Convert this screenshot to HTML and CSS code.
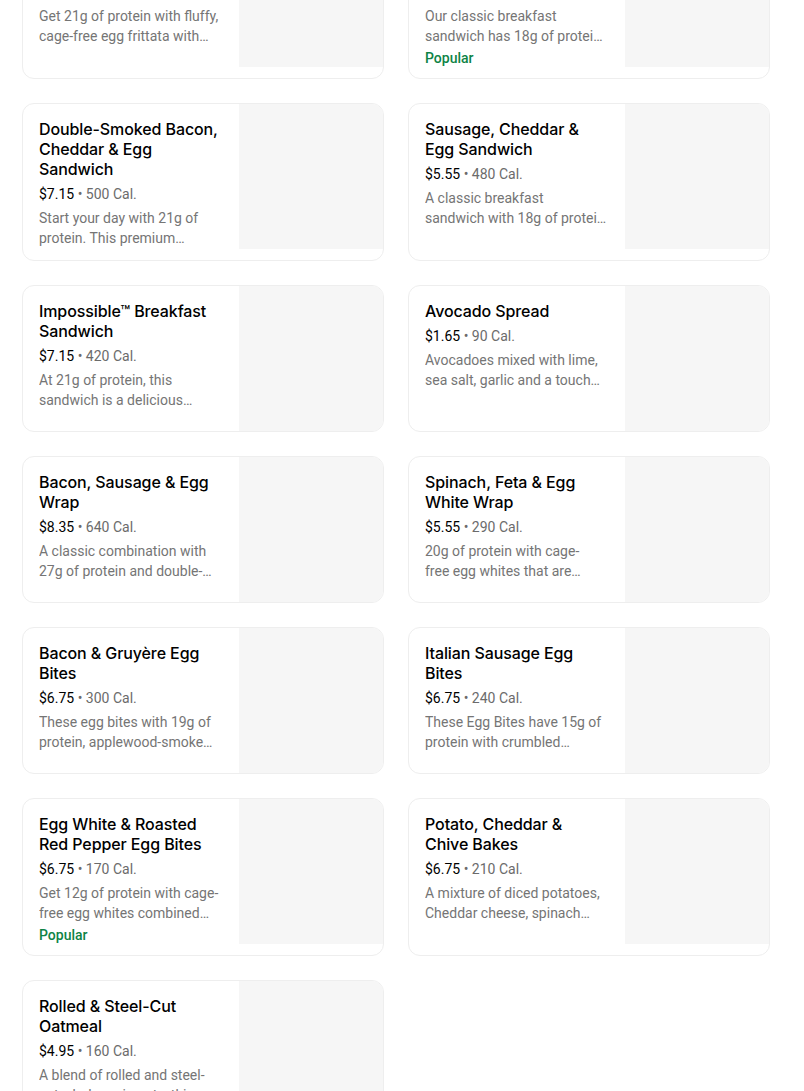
FILE: index.html
```html
<!DOCTYPE html>
<html lang="en">
<head>
<meta charset="utf-8">
<title>Breakfast menu</title>
<link rel="stylesheet" href="styles.css">
</head>
<body>
<main class="menu">
  <article class="card">
    <div class="info">
      <h3 class="title">Turkey Bacon, Cheddar &amp; Egg White Sandwich</h3>
      <p class="meta"><span class="price">$5.95</span> • <span>230 Cal.</span></p>
      <p class="desc">Get 21g of protein with fluffy,<br>cage-free egg frittata with…</p>
    </div>
    <div class="thumb"></div>
  </article>
  <article class="card">
    <div class="info">
      <h3 class="title">Bacon, Gouda &amp; Egg Breakfast Sandwich</h3>
      <p class="meta"><span class="price">$5.95</span> • <span>360 Cal.</span></p>
      <p class="desc">Our classic breakfast<br>sandwich has 18g of protei…</p>
      <p class="tag">Popular</p>
    </div>
    <div class="thumb"></div>
  </article>

  <article class="card">
    <div class="info">
      <h3 class="title">Double-Smoked Bacon, Cheddar &amp; Egg Sandwich</h3>
      <p class="meta"><span class="price">$7.15</span> • <span>500 Cal.</span></p>
      <p class="desc">Start your day with 21g of<br>protein. This premium…</p>
    </div>
    <div class="thumb"></div>
  </article>
  <article class="card">
    <div class="info">
      <h3 class="title">Sausage, Cheddar &amp; Egg Sandwich</h3>
      <p class="meta"><span class="price">$5.55</span> • <span>480 Cal.</span></p>
      <p class="desc">A classic breakfast<br>sandwich with 18g of protei…</p>
    </div>
    <div class="thumb"></div>
  </article>

  <article class="card">
    <div class="info">
      <h3 class="title">Impossible™ Breakfast Sandwich</h3>
      <p class="meta"><span class="price">$7.15</span> • <span>420 Cal.</span></p>
      <p class="desc">At 21g of protein, this<br>sandwich is a delicious…</p>
    </div>
    <div class="thumb"></div>
  </article>
  <article class="card">
    <div class="info">
      <h3 class="title">Avocado Spread</h3>
      <p class="meta"><span class="price">$1.65</span> • <span>90 Cal.</span></p>
      <p class="desc">Avocadoes mixed with lime,<br>sea salt, garlic and a touch…</p>
    </div>
    <div class="thumb"></div>
  </article>

  <article class="card">
    <div class="info">
      <h3 class="title">Bacon, Sausage &amp; Egg Wrap</h3>
      <p class="meta"><span class="price">$8.35</span> • <span>640 Cal.</span></p>
      <p class="desc">A classic combination with<br>27g of protein and double-…</p>
    </div>
    <div class="thumb"></div>
  </article>
  <article class="card">
    <div class="info">
      <h3 class="title">Spinach, Feta &amp; Egg White Wrap</h3>
      <p class="meta"><span class="price">$5.55</span> • <span>290 Cal.</span></p>
      <p class="desc">20g of protein with cage-<br>free egg whites that are…</p>
    </div>
    <div class="thumb"></div>
  </article>

  <article class="card">
    <div class="info">
      <h3 class="title">Bacon &amp; Gruyère Egg Bites</h3>
      <p class="meta"><span class="price">$6.75</span> • <span>300 Cal.</span></p>
      <p class="desc">These egg bites with 19g of<br>protein, applewood-smoke…</p>
    </div>
    <div class="thumb"></div>
  </article>
  <article class="card">
    <div class="info">
      <h3 class="title">Italian Sausage Egg Bites</h3>
      <p class="meta"><span class="price">$6.75</span> • <span>240 Cal.</span></p>
      <p class="desc">These Egg Bites have 15g of<br>protein with crumbled…</p>
    </div>
    <div class="thumb"></div>
  </article>

  <article class="card">
    <div class="info">
      <h3 class="title">Egg White &amp; Roasted Red Pepper Egg Bites</h3>
      <p class="meta"><span class="price">$6.75</span> • <span>170 Cal.</span></p>
      <p class="desc">Get 12g of protein with cage-<br>free egg whites combined…</p>
      <p class="tag">Popular</p>
    </div>
    <div class="thumb"></div>
  </article>
  <article class="card">
    <div class="info">
      <h3 class="title">Potato, Cheddar &amp; Chive Bakes</h3>
      <p class="meta"><span class="price">$6.75</span> • <span>210 Cal.</span></p>
      <p class="desc">A mixture of diced potatoes,<br>Cheddar cheese, spinach…</p>
    </div>
    <div class="thumb"></div>
  </article>

  <article class="card">
    <div class="info">
      <h3 class="title">Rolled &amp; Steel-Cut Oatmeal</h3>
      <p class="meta"><span class="price">$4.95</span> • <span>160 Cal.</span></p>
      <p class="desc">A blend of rolled and steel-<br>cut whole grain oats, this…</p>
    </div>
    <div class="thumb"></div>
  </article>
</main>
</body>
</html>
```
FILE: styles.css
```css
html, body {
  margin: 0;
  padding: 0;
  background: #ffffff;
}

body {
  font-family: Inter, "Noto Sans", "Liberation Sans", sans-serif;
  color: #000000;
  overflow: hidden;
}

.menu {
  width: 748px;
  margin: -79px 0 0 22px;
  display: grid;
  grid-template-columns: 1fr 1fr;
  gap: 24px;
}

.card {
  display: flex;
  border: 1px solid #eeeeee;
  border-radius: 12px;
  overflow: hidden;
  background: #ffffff;
}

.info {
  flex: 1;
  min-width: 0;
  padding: 15px 16px 12px 16px;
}

.title {
  margin: 0 0 5px 0;
  font-size: 16px;
  line-height: 20px;
  font-weight: 500;
  letter-spacing: -0.1px;
  color: #000000;
}

.meta {
  margin: 0 0 4px 0;
  font-family: Roboto, "Noto Sans", sans-serif;
  font-size: 14px;
  line-height: 20px;
  color: #6b6b6b;
}

.price {
  color: #000000;
}

.desc {
  margin: 0;
  font-family: Roboto, "Noto Sans", sans-serif;
  font-size: 14px;
  line-height: 20px;
  color: #757575;
  white-space: nowrap;
  overflow: hidden;
}

.tag {
  margin: 4px 0 0 0;
  font-family: Roboto, "Noto Sans", sans-serif;
  font-size: 14px;
  line-height: 16px;
  font-weight: 500;
  color: #0e8345;
}

.thumb {
  flex: 0 0 144px;
  width: 144px;
  height: 145px;
  align-self: flex-start;
  background: #f6f6f6;
}
```
